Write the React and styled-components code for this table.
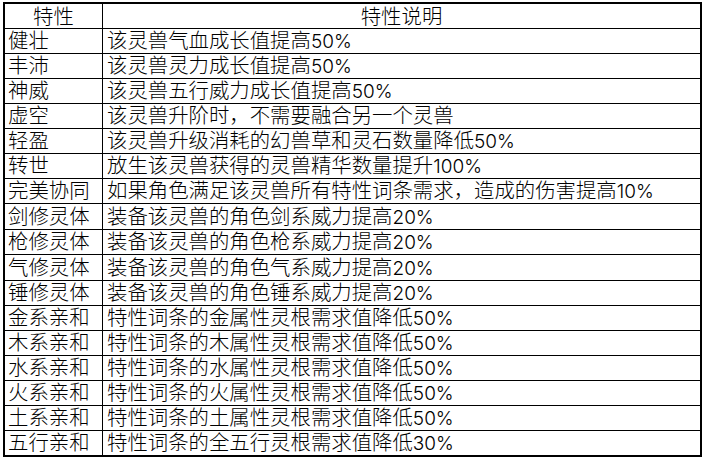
import styled, { createGlobalStyle } from 'styled-components';

const GlobalStyle = createGlobalStyle`
  html, body {
    margin: 0;
    padding: 0;
    background: #ffffff;
  }
  body {
    font-family: "Liberation Sans", "Noto Sans CJK SC", sans-serif;
    color: #000000;
  }
`;

const Page = styled.div`
  width: 705px;
  height: 460px;
  padding: 2px 0 0 3px;
  box-sizing: border-box;
`;

const Sheet = styled.div`
  width: 699px;
  border: 2px solid #000;
  box-sizing: border-box;
  display: flex;
  flex-direction: column;
`;

const Row = styled.div`
  display: grid;
  grid-template-columns: 98px 1fr;
  height: ${(p) => p.$h}px;
  box-sizing: border-box;
  border-bottom: 1px solid #000;
  &:last-child {
    border-bottom: none;
  }
`;

const Cell = styled.div`
  display: flex;
  align-items: center;
  justify-content: ${(p) => (p.$center ? 'center' : 'flex-start')};
  padding: ${(p) => (p.$head ? 3 : 1)}px 0 0 ${(p) => (p.$center ? 0 : p.$pad)}px;
  font-size: 20.4px;
  font-weight: 300;
  line-height: 1;
  white-space: nowrap;
  box-sizing: border-box;
  &:first-child {
    border-right: 1px solid #000;
  }
`;

const Num = styled.span`
  font-family: "Inter", "Liberation Sans", sans-serif;
  font-weight: 300;
  font-size: 19px;
`;

const rows = [
  ['健壮', '该灵兽气血成长值提高50%'],
  ['丰沛', '该灵兽灵力成长值提高50%'],
  ['神威', '该灵兽五行威力成长值提高50%'],
  ['虚空', '该灵兽升阶时，不需要融合另一个灵兽'],
  ['轻盈', '该灵兽升级消耗的幻兽草和灵石数量降低50%'],
  ['转世', '放生该灵兽获得的灵兽精华数量提升100%'],
  ['完美协同', '如果角色满足该灵兽所有特性词条需求，造成的伤害提高10%'],
  ['剑修灵体', '装备该灵兽的角色剑系威力提高20%', 26],
  ['枪修灵体', '装备该灵兽的角色枪系威力提高20%'],
  ['气修灵体', '装备该灵兽的角色气系威力提高20%', 26],
  ['锤修灵体', '装备该灵兽的角色锤系威力提高20%'],
  ['金系亲和', '特性词条的金属性灵根需求值降低50%'],
  ['木系亲和', '特性词条的木属性灵根需求值降低50%'],
  ['水系亲和', '特性词条的水属性灵根需求值降低50%'],
  ['火系亲和', '特性词条的火属性灵根需求值降低50%'],
  ['土系亲和', '特性词条的土属性灵根需求值降低50%'],
  ['五行亲和', '特性词条的全五行灵根需求值降低30%', 24],
];

function Text({ value }) {
  return (
    <span>
      {value.split(/(\d+%)/).map((part, i) =>
        /\d+%/.test(part) ? <Num key={i}>{part}</Num> : part
      )}
    </span>
  );
}

export default function App() {
  return (
    <>
      <GlobalStyle />
      <Page>
        <Sheet>
          <Row $h={25}>
            <Cell $center $head>特性</Cell>
            <Cell $center $head>特性说明</Cell>
          </Row>
          {rows.map(([name, desc, h]) => (
            <Row key={name} $h={h || 25}>
              <Cell $pad={3}>{name}</Cell>
              <Cell $pad={4}>
                <Text value={desc} />
              </Cell>
            </Row>
          ))}
        </Sheet>
      </Page>
    </>
  );
}
